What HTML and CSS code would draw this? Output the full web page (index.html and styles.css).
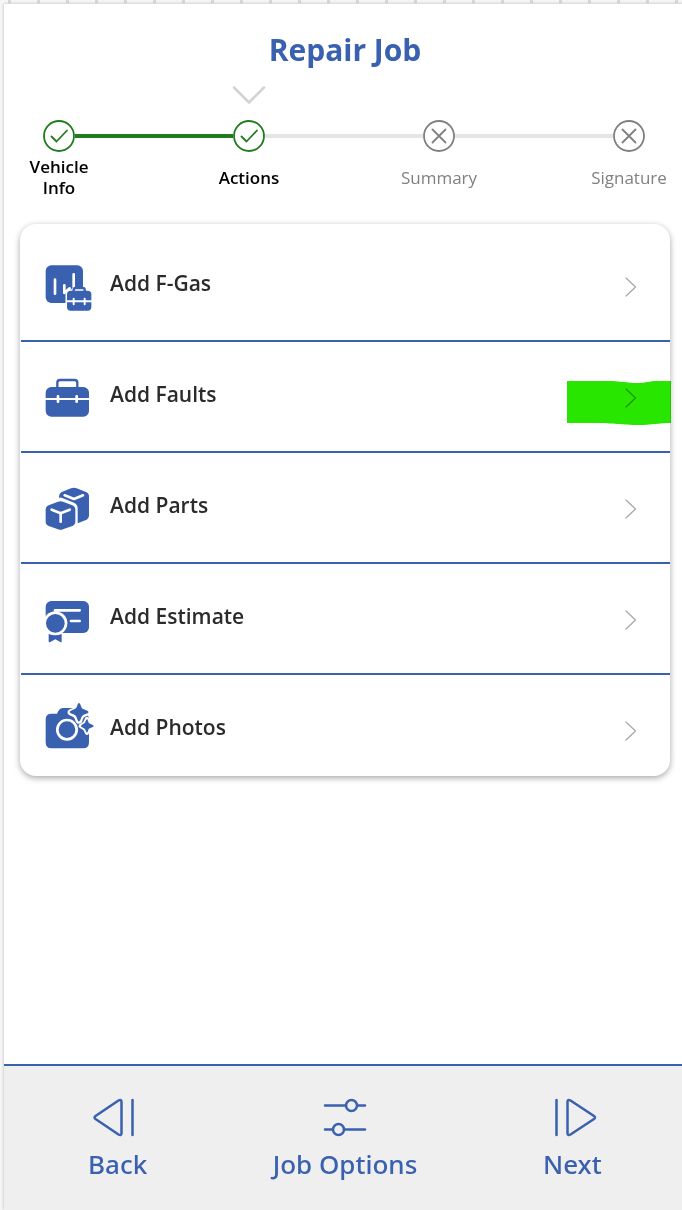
FILE: index.html
```
<!DOCTYPE html>
<html lang="en">
<head>
<meta charset="utf-8">
<meta name="viewport" content="width=device-width, initial-scale=1">
<title>Repair Job</title>
<link rel="stylesheet" href="styles.css">
</head>
<body>
<div class="screen">
  <header class="header">
    <h1 class="title">Repair Job</h1>
  </header>

  <ol class="steps">
    <li class="step done">
      <span class="pointer"></span>
      <svg class="mark" viewBox="0 0 32 32" aria-hidden="true"><circle cx="16" cy="16" r="15"/><path d="M8.500 16.500l5 5L24 10.500"/></svg>
      <span class="step-label">Vehicle Info</span>
    </li>
    <li class="link link-done" aria-hidden="true"></li>
    <li class="step done" aria-current="step">
      <svg class="pointer" viewBox="0 0 34 18" aria-hidden="true"><path d="M2 1.500l15 15 15-15"/></svg>
      <svg class="mark" viewBox="0 0 32 32" aria-hidden="true"><circle cx="16" cy="16" r="15"/><path d="M8.500 16.500l5 5L24 10.500"/></svg>
      <span class="step-label">Actions</span>
    </li>
    <li class="link" aria-hidden="true"></li>
    <li class="step">
      <span class="pointer"></span>
      <svg class="mark" viewBox="0 0 32 32" aria-hidden="true"><circle cx="16" cy="16" r="15"/><path d="M9.500 9.500l13 13M22.500 9.500l-13 13"/></svg>
      <span class="step-label">Summary</span>
    </li>
    <li class="link" aria-hidden="true"></li>
    <li class="step">
      <span class="pointer"></span>
      <svg class="mark" viewBox="0 0 32 32" aria-hidden="true"><circle cx="16" cy="16" r="15"/><path d="M9.500 9.500l13 13M22.500 9.500l-13 13"/></svg>
      <span class="step-label">Signature</span>
    </li>
  </ol>

  <main class="main">
    <ul class="card">
      <li class="item">
        <button class="row" type="button">
          <svg class="icon" viewBox="0 0 210 210" aria-hidden="true">
            <rect class="fill" x="29" y="31" width="112" height="113" rx="17"/>
            <path class="halo" d="M113 109v-4q0-2 4-2h26q4 0 4 2v4h8q11 0 11 11v36q0 11-11 11H104q-9 0-9-11v-36q0-11 9-11z"/>
            <path class="cut" d="M57 74v42M113 58v38M85 91v23l16-14"/>
            <rect class="fill" x="93" y="107" width="73" height="60" rx="11"/>
            <path class="handle" d="M113 109v-4q0-6 6-6h21q6 0 6 6v4"/>
            <path class="cut thin" d="M93 139h73"/>
            <path class="cut thin" d="M113 131v17M146 131v17"/>
          </svg>
          <span class="row-label">Add F-Gas</span>
          <svg class="chevron" viewBox="0 0 12 20" aria-hidden="true"><path d="M1 1l9.500 9L1 19"/></svg>
        </button>
      </li>
      <li class="item">
        <button class="row" type="button">
          <svg class="icon" viewBox="0 0 210 210" aria-hidden="true">
            <rect class="fill" x="29" y="63" width="130" height="89" rx="17"/>
            <path class="handle" d="M64 66V50q0-8 8-8h44q8 0 8 8v16"/>
            <path class="cut thin" d="M28 99h132"/>
            <path class="cut" d="M66 91v16M122 91v16"/>
          </svg>
          <span class="row-label">Add Faults</span>
          <svg class="chevron" viewBox="0 0 12 20" aria-hidden="true"><path d="M1 1l9.500 9L1 19"/></svg>
        </button>
        <svg class="marker" viewBox="0 0 104 46" aria-hidden="true"><path d="M0 1h40C54 1 60 3 70 3s12-2 20-2h14v42c-12 0-20 2-32 2-18 0-24-2-45-2H0z"/></svg>
      </li>
      <li class="item">
        <button class="row" type="button">
          <svg class="icon" viewBox="0 0 210 210" aria-hidden="true">
            <path class="fill" d="M105 34q8-4 17 0l28 11q9 4 9 14v56q0 10-9 14l-25 10V94q0-12-11-17L79 63q-10-3-10 1V58q0-8 8-13z"/>
            <path class="cut" d="M86 55l28 11 27-11"/>
            <path class="fill" d="M66 74q8-3 15 0l28 11q9 4 9 13v36q0 9-9 13l-28 10q-8 3-15 0l-28-10q-9-4-9-13V98q0-9 9-13z"/>
            <path class="cut" d="M47 98l27 11 27-11M74 109v25"/>
          </svg>
          <span class="row-label">Add Parts</span>
          <svg class="chevron" viewBox="0 0 12 20" aria-hidden="true"><path d="M1 1l9.500 9L1 19"/></svg>
        </button>
      </li>
      <li class="item">
        <button class="row" type="button">
          <svg class="icon" viewBox="0 0 210 210" aria-hidden="true">
            <rect class="fill" x="29" y="39" width="130" height="96" rx="17"/>
            <path class="cut" d="M57 67h74M105 99h26"/>
            <circle class="back" cx="58" cy="106" r="36"/>
            <rect class="back" x="22" y="106" width="55" height="32"/>
            <circle class="fill" cx="58" cy="106" r="28"/>
            <path class="fill" d="M38 138q20 8 39 0v22q0 4-4 2l-15-8-15 8q-5 2-5-2z"/>
          </svg>
          <span class="row-label">Add Estimate</span>
          <svg class="chevron" viewBox="0 0 12 20" aria-hidden="true"><path d="M1 1l9.500 9L1 19"/></svg>
        </button>
      </li>
      <li class="item">
        <button class="row" type="button">
          <svg class="icon" viewBox="0 12 210 210" aria-hidden="true">
            <path class="fill" d="M46 56h17l4-8q5-9 14-9h28q9 0 14 9l4 8h15q17 0 17 17v69q0 18-17 18H46q-17 0-17-18V73q0-17 17-17z"/>
            <path class="halo" d="M129 26q4 0 5 8 3 9 13 12 10 2 10 6t-10 6q-9 3-13 13-1 9-5 9t-6-9q-3-10-12-13-10-2-10-6t10-6q10-3 12-12 2-8 6-8z"/>
            <path class="halo" d="M153 72q3 9 5 12 4 4 14 9-10 4-14 8-2 4-5 12-4-9-6-12-4-4-13-8 9-4 13-9 3-3 6-12z"/>
            <circle class="ring" cx="93" cy="104" r="29"/>
            <path class="fill" d="M129 24c2 0 4 2 6 10 3 8 5 8 14 11 11 4 11 9 0 12-9 3-11 4-14 13-5 13-8 13-12 0-3-9-5-10-13-13-12-4-12-8 0-12 8-3 10-4 13-11 2-8 4-10 6-10z"/>
            <path class="fill" d="M153 73c2 0 3 6 5 10 2 3 15 6 15 10s-13 6-15 9c-2 4-3 11-5 11s-4-7-6-11c-3-3-12-5-12-9s9-7 12-10c2-4 4-10 6-10z"/>
          </svg>
          <span class="row-label">Add Photos</span>
          <svg class="chevron" viewBox="0 0 12 20" aria-hidden="true"><path d="M1 1l9.500 9L1 19"/></svg>
        </button>
      </li>
    </ul>
  </main>

  <nav class="footer" aria-label="Job navigation">
    <button class="nav" type="button">
      <svg class="nav-icon" viewBox="0 0 48 40" aria-hidden="true"><path d="M38.500 2v35M27.500 4v31q0 3-3 1.500L1.500 21q-2-1.500 0-3L24.500 2.500Q27.500 1 27.500 4z"/></svg>
      <span>Back</span>
    </button>
    <button class="nav" type="button">
      <svg class="nav-icon" viewBox="0 0 48 40" aria-hidden="true"><path d="M4 7.500h21M37 7.500h7M4 31.500h7M23 31.500h21"/><circle cx="30.500" cy="7.500" r="5.500"/><circle cx="17.500" cy="31.500" r="5.500"/></svg>
      <span>Job Options</span>
    </button>
    <button class="nav" type="button">
      <svg class="nav-icon" viewBox="0 0 48 40" aria-hidden="true"><path d="M8.500 2v35M19.500 4v31q0 3 3 1.500L46 21q2-1.500 0-3L22.500 2.500Q19.500 1 19.500 4z"/></svg>
      <span>Next</span>
    </button>
  </nav>
</div>
</body>
</html>
```
FILE: styles.css
```
* {
  box-sizing: border-box;
}

body {
  margin: 0;
  min-height: 100vh;
  padding: 4px 0 0 4px;
  display: flex;
  overflow-x: hidden;
  background:
    repeating-linear-gradient(90deg, transparent 0 8px, #d8d8d8 8px 11px, transparent 11px 29px) 0 0 / 100% 3px no-repeat,
    #f5f5f5;
  font-family: "Open Sans", "Noto Sans", sans-serif;
}

button {
  border: 0;
  background: none;
  font: inherit;
  cursor: pointer;
}

ol,
ul {
  margin: 0;
  padding: 0;
  list-style: none;
}

svg {
  fill: none;
  overflow: visible;
  stroke-linecap: round;
  stroke-linejoin: round;
}

.screen {
  flex: 1;
  margin-right: -4px;
  display: flex;
  flex-direction: column;
  background: #fff;
  box-shadow: 0 0 3px rgba(0, 0, 0, 0.25);
}

.header {
  padding-top: 26px;
}

.title {
  margin: 0;
  color: #3a60b0;
  font-size: 30px;
  line-height: 40px;
  font-weight: 700;
  text-align: center;
}

/* Progress */

.steps {
  display: flex;
  align-items: flex-start;
  padding: 16px 17px 0 15px;
}

.step {
  flex: none;
  width: 80px;
  display: flex;
  flex-direction: column;
  align-items: center;
  color: #808080;
}

.done {
  color: #000;
}

.pointer {
  width: 34px;
  height: 18px;
  margin-bottom: 16px;
  stroke: #d3d3d3;
  stroke-width: 2.500;
}

.mark {
  width: 32px;
  height: 32px;
  stroke: #808080;
  stroke-width: 1.800;
}

.done .mark {
  stroke: #237b1f;
}

.step-label {
  height: 42px;
  margin-top: 4px;
  display: flex;
  align-items: center;
  font-size: 17px;
  line-height: 21px;
  text-align: center;
}

.done .step-label {
  font-weight: 600;
}

.link {
  flex: 1;
  height: 4px;
  margin: 48px -24px 0;
  background: #e5e5e5;
}

.link-done {
  background: #237b1f;
}

/* Action list */

.main {
  flex: 1;
  padding: 26px 16px;
}

.card {
  padding: 7px 0 1px 1px;
  border-radius: 16px;
  background: #fff;
  box-shadow: 0 2px 6px rgba(0, 0, 0, 0.35);
}

.item {
  position: relative;
  border-bottom: 2px solid #3a60b0;
}

.item:last-child {
  border-bottom: 0;
}

.row {
  width: 100%;
  display: flex;
  align-items: flex-start;
  gap: 4px;
  padding: 24px 33px 15px 15px;
  text-align: left;
}

.item:last-child .row {
  padding-bottom: 6px;
}

.icon {
  flex: none;
  width: 70px;
  height: 70px;
}

.fill {
  fill: #3a60b0;
}

.back {
  fill: #fff;
}

.cut {
  stroke: #fff;
  stroke-width: 8;
}

.thin {
  stroke-width: 6;
}

.halo {
  fill: #fff;
  stroke: #fff;
  stroke-width: 13;
}

.handle {
  stroke: #3a60b0;
  stroke-width: 7;
}

.ring {
  fill: #3a60b0;
  stroke: #fff;
  stroke-width: 8;
}

.row-label {
  flex: 1;
  color: #2b2b2b;
  font-size: 21px;
  line-height: 56px;
  font-weight: 600;
}

.chevron {
  width: 12px;
  height: 64px;
  stroke: #a6a6a6;
  stroke-width: 1.200;
}

.marker {
  position: absolute;
  top: 38px;
  right: -1px;
  width: 104px;
  height: 46px;
  fill: #28e600;
  mix-blend-mode: multiply;
  pointer-events: none;
}

/* Bottom bar */

.footer {
  display: grid;
  grid-template-columns: repeat(3, 1fr);
  padding-bottom: 26px;
  border-top: 2px solid #3a60b0;
  background: #efefef;
}

.nav {
  display: flex;
  flex-direction: column;
  align-items: center;
  gap: 6px;
  padding: 32px 0 0;
  color: #3a60b0;
  font-family: "Noto Sans", "Open Sans", sans-serif;
  font-size: 26px;
  line-height: 40px;
  font-weight: 500;
}

.nav-icon {
  width: 48px;
  height: 40px;
  stroke: #3a60b0;
  stroke-width: 2.500;
}
```
